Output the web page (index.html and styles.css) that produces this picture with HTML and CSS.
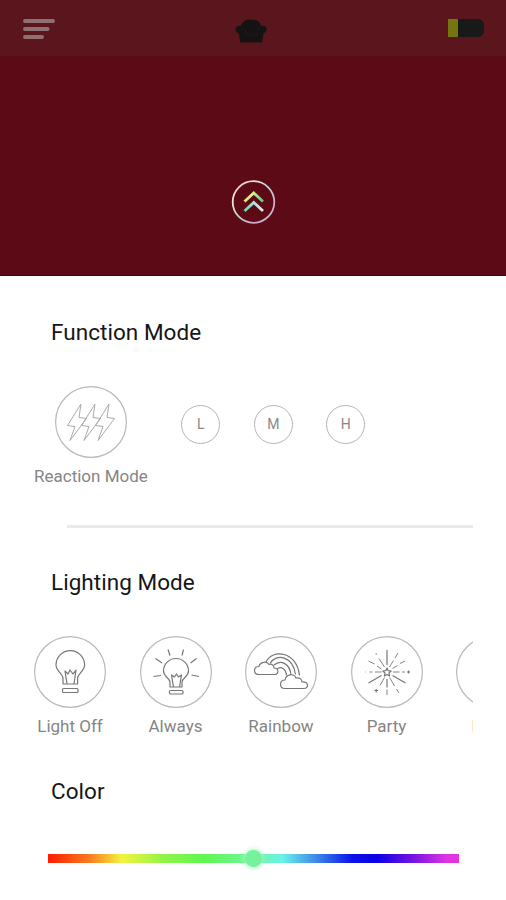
FILE: index.html
```html
<!DOCTYPE html>
<html lang="en">
<head>
  <meta charset="UTF-8">
  <title>Light Control</title>
  <link rel="stylesheet" href="styles.css">
</head>
<body>
  <header class="topbar">
    <svg class="menu-icon" width="34" height="24" viewBox="0 0 34 24">
      <path d="M4 4h28M4 12h22.500M4 20h17"/>
    </svg>
    <svg class="sofa-icon" width="32" height="24" viewBox="0 0 32 24">
      <path d="M6 7C7 2 11 0.500 16 0.500S25 2 26 7c4-1 6 1 5.500 4-.5 2-2 3-3 3.500L27 23.500H5L4 14.500c-2-.5-3.500-2-3.500-4C.5 8 3 6 6 7z"/>
      <path class="sofa-line" d="M8 8c3 1 2 5 3 8h11c1-3 0-7 3-8"/>
    </svg>
    <div class="battery"><span class="battery-level"></span></div>
  </header>

  <section class="hero">
    <svg class="expand-icon" width="46" height="46" viewBox="0 0 46 46">
      <defs>
        <linearGradient id="ring" x1="0" y1="0" x2="1" y2="1">
          <stop offset="0" stop-color="#e5b8c6"/>
          <stop offset=".25" stop-color="#eee6cf"/>
          <stop offset=".5" stop-color="#b3d6cb"/>
          <stop offset=".75" stop-color="#d8a6cf"/>
          <stop offset="1" stop-color="#a9d9bd"/>
        </linearGradient>
        <linearGradient id="arrow" x1="0" y1="0" x2="1" y2="0">
          <stop offset="0" stop-color="#efdf75"/>
          <stop offset=".45" stop-color="#d9ee94"/>
          <stop offset="1" stop-color="#58c886"/>
        </linearGradient>
        <linearGradient id="arrow-low" x1="0" y1="0" x2="1" y2="0">
          <stop offset="0" stop-color="#66d6ac"/>
          <stop offset=".5" stop-color="#a9e1da"/>
          <stop offset="1" stop-color="#eee3eb"/>
        </linearGradient>
      </defs>
      <circle cx="23.500" cy="23" r="20.800" stroke="url(#ring)"/>
      <path class="chevron" d="M14.500 22.500L23.800 14l9.200 8.500" stroke="url(#arrow)"/>
      <path class="chevron" d="M14.500 32L23.800 23.500l9.200 8.500" stroke="url(#arrow-low)"/>
    </svg>
  </section>

  <main class="panel">
    <h2 class="title">Function Mode</h2>
    <div class="functions">
      <div class="mode">
        <svg class="mode-icon" viewBox="0 0 72 72">
          <circle cx="36" cy="36" r="35.400"/>
          <g class="bolts">
            <path d="M26 18L12.500 39.500l7.500 1L15 54.500L31.500 32.500l-7.500-1z"/>
            <path d="M40 18L26.500 39.500l7.500 1L29 54.500L45.500 32.500l-7.500-1z"/>
            <path d="M54 18L40.500 39.500l7.500 1L43 54.500L59.500 32.500l-7.500-1z"/>
          </g>
        </svg>
        <span class="label">Reaction Mode</span>
      </div>
      <div class="levels">
        <span class="level">L</span>
        <span class="level">M</span>
        <span class="level">H</span>
      </div>
    </div>
    <div class="divider"></div>

    <h2 class="title">Lighting Mode</h2>
    <div class="lights">
      <div class="mode">
        <svg class="mode-icon" viewBox="0 0 72 72">
          <circle cx="36" cy="36" r="35.400"/>
          <g class="drawing">
            <path d="M29 48v-6c0-4-7-7-7-13a14.300 14.300 0 0 1 28.600 0c0 6-7 9-7 13v6z"/>
            <path d="M33 48l-2-13 3 3 2-4 3 4 3-4-2 14"/>
            <rect x="28.500" y="52.500" width="15.500" height="4" rx="1"/>
          </g>
        </svg>
        <span class="label">Light Off</span>
      </div>
      <div class="mode">
        <svg class="mode-icon" viewBox="0 0 72 72">
          <circle cx="36" cy="36" r="35.400"/>
          <g class="drawing">
            <path d="M30 51v-5c0-4-6.500-5-6.500-11a12.500 12.500 0 0 1 25 0c0 6-6.500 7-6.500 11v5z"/>
            <path d="M33.500 51l-2-12 3 2 2-3 2 3 3-2-2 12"/>
            <rect x="29.500" y="54.500" width="13.500" height="3.500" rx="1"/>
            <path d="M28 13.500l2 6M43.500 13.500l-1.500 6M15.500 22.500l6.500 4.500M56.500 22.500L50.500 27M13.500 40.500l7.500-1M51.500 39l7.500 1.500"/>
          </g>
        </svg>
        <span class="label">Always</span>
      </div>
      <div class="mode">
        <svg class="mode-icon" viewBox="0 0 72 72">
          <circle cx="36" cy="36" r="35.400"/>
          <g class="drawing">
            <path d="M14 38.500c-6 0-6-8 0-8 1-5 8-5.500 10-2 3-1 5 1 5 3.500 5 0 5 6.500 1 6.500z"/>
            <path d="M40 52.500c-6 0-6-8.500 0-8.500 1-6 9-7 11-2 4-1 6 2 6 4 7-1 7 6.500 2 6.500z"/>
            <path d="M21 26C27 12.500 52 15 54.500 39.500M25 27.500C31 17 48 20 50.500 38.500M29 29c7-6 16-1 17 10M32 33c4-3.500 9 0 9.500 6.500"/>
          </g>
        </svg>
        <span class="label">Rainbow</span>
      </div>
      <div class="mode">
        <svg class="mode-icon" viewBox="0 0 72 72">
          <circle cx="36" cy="36" r="35.400"/>
          <g class="drawing">
            <path d="M36 32l1.200 2.700 3 .3-2.200 2 .6 3-2.600-1.600-2.600 1.600.6-3-2.200-2 3-.3z"/>
            <path d="M36 14v15M36 43v8.500M30.500 39.500L17.500 47M41.500 39.500L54.500 47"/>
            <path class="thin" d="M36 53.500v5.500M47 17l-3 5M42.500 24.500L38.500 31M28 22.500l5.500 8.500M17.500 25l6 3M26 30l4.500 3M54 25l-5 2.500M46.500 29.500L41.500 32.500M18.500 36h3M24 36h6.500M42 36h6.500M51 36h3M33.500 41.500l-4.500 8M38.500 41.500l5 8.500M45.500 53l2.500 4"/>
            <path d="M24.500 18h1.500M14.500 36h.5M56 36h3M57.500 34.500v3M23.500 54.500h3.500M25.200 53v3.500"/>
          </g>
        </svg>
        <span class="label">Party</span>
      </div>
      <div class="mode">
        <svg class="mode-icon" viewBox="0 0 72 72">
          <circle cx="36" cy="36" r="35.400"/>
        </svg>
        <span class="label">Flash</span>
      </div>
    </div>

    <h2 class="title">Color</h2>
    <div class="slider"><span class="thumb"></span></div>
  </main>
</body>
</html>
```
FILE: styles.css
```css
* {
  box-sizing: border-box;
}
body {
  margin: 0;
  height: 900px;
  overflow: hidden;
  background: #fff;
  font-family: Roboto, sans-serif;
}
svg {
  display: block;
  fill: none;
}
.topbar {
  display: flex;
  justify-content: space-between;
  height: 56px;
  padding: 17px 22px 0 21px;
  background: #5a161c;
}
.menu-icon {
  stroke: #8f7073;
  stroke-width: 4;
  stroke-linecap: round;
}
.sofa-icon {
  margin: 2px 2px 0 0;
  fill: #151214;
}
.sofa-line {
  fill: none;
  stroke: #26161a;
}
.battery {
  width: 36px;
  height: 18px;
  margin-top: 2px;
  background: #181a19;
  border-radius: 1px 6px 6px 1px;
}
.battery-level {
  display: block;
  width: 10px;
  height: 18px;
  background: #74750f;
}
.hero {
  display: flex;
  justify-content: center;
  height: 220px;
  padding-top: 123px;
  background: #5d0a17;
  border-bottom: 1px solid #3c0810;
}
.expand-icon {
  stroke-width: 1.8;
}
.chevron {
  stroke-width: 2.8;
}
.panel {
  padding: 40px 33px 0 34px;
}
.title {
  margin: 0 0 0 17px;
  font-size: 22.5px;
  font-weight: 400;
  line-height: 32px;
  letter-spacing: 0.05px;
  color: #161616;
}
.functions {
  display: flex;
  margin-top: 38px;
}
.mode {
  display: flex;
  flex-direction: column;
  align-items: center;
}
.mode-icon {
  width: 72px;
  height: 72px;
  stroke: #b9b9b9;
  stroke-width: 1.2;
}
.bolts {
  stroke: #aaa;
  stroke-width: 1;
}
.drawing {
  stroke: #777;
  stroke-width: 1.2;
  stroke-linejoin: round;
}
.thin {
  stroke-width: 0.9;
}
.label {
  margin-top: 7px;
  font-size: 17px;
  line-height: 22px;
  white-space: nowrap;
  color: #858585;
}
.levels {
  display: flex;
  gap: 33.5px;
  margin: 19px 0 0 33.5px;
}
.level {
  width: 39px;
  height: 39px;
  border: 1px solid #b5b5b5;
  border-radius: 50%;
  font-size: 14px;
  line-height: 37px;
  text-align: center;
  color: #888;
}
.divider {
  height: 3px;
  margin: 38px 0 38px 33px;
  background: #eaeaea;
}
.lights {
  display: flex;
  gap: 33.5px;
  height: 112px;
  margin-top: 38px;
  margin-bottom: 27px;
  overflow: hidden;
}
.lights .mode {
  flex: 0 0 72px;
}
.slider {
  display: flex;
  align-items: center;
  justify-content: center;
  width: 411px;
  height: 9px;
  margin: 47px 0 0 14px;
  background: linear-gradient(to right, #fb1d00, #fb7a20 10%, #f4f33f 18%, #90f548 28%, #5ff650 38%, #72f6a0 50%, #68f2e8 57%, #3f8ce8 65%, #0a12ea 74%, #0b00e8 80%, #7814e0 89%, #df35e0 97%, #e233df);
}
.thumb {
  flex: none;
  width: 17px;
  height: 17px;
  border-radius: 50%;
  background: #76f19c;
  box-shadow: 0 0 5px 1px #a5f8c0;
}
```
